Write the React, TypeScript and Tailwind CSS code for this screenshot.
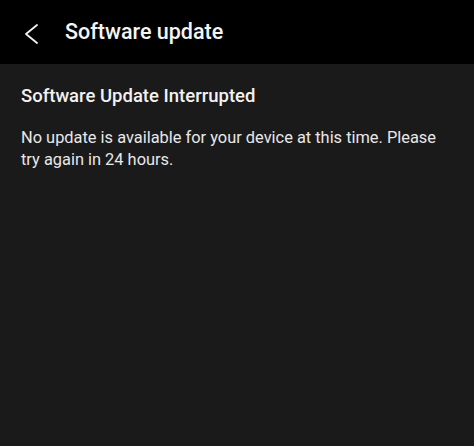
export default function App() {
  return (
    <div className="w-[474px] h-[446px] bg-[#1a1a1a] text-white overflow-hidden font-['Roboto','Noto_Sans',sans-serif]">
      {/* Top bar */}
      <header className="h-[64px] bg-black flex items-center">
        <button className="w-[65px] h-full flex items-center pl-[24px] pt-[4px]">
          <svg width="14" height="20" viewBox="0 0 14 20" fill="none" stroke="#f2f2f2" strokeWidth="1.8" strokeLinecap="round" strokeLinejoin="round">
            <path d="M13 1 L2 10 L13 19" />
          </svg>
        </button>
        <h1 className="text-[21.5px] font-medium text-[#f5f5f5] pt-[1px]">Software update</h1>
      </header>

      {/* Content */}
      <main className="px-[21px] pt-[20px]">
        <h2 className="text-[18.5px] font-medium leading-[24px] text-[#f2f2f2]">Software Update Interrupted</h2>
        <p className="mt-[19px] w-[425px] text-[16.4px] leading-[22px] text-[#e8e8e8]">
          No update is available for your device at this time. Please try again in 24 hours.
        </p>
      </main>
    </div>
  );
}
